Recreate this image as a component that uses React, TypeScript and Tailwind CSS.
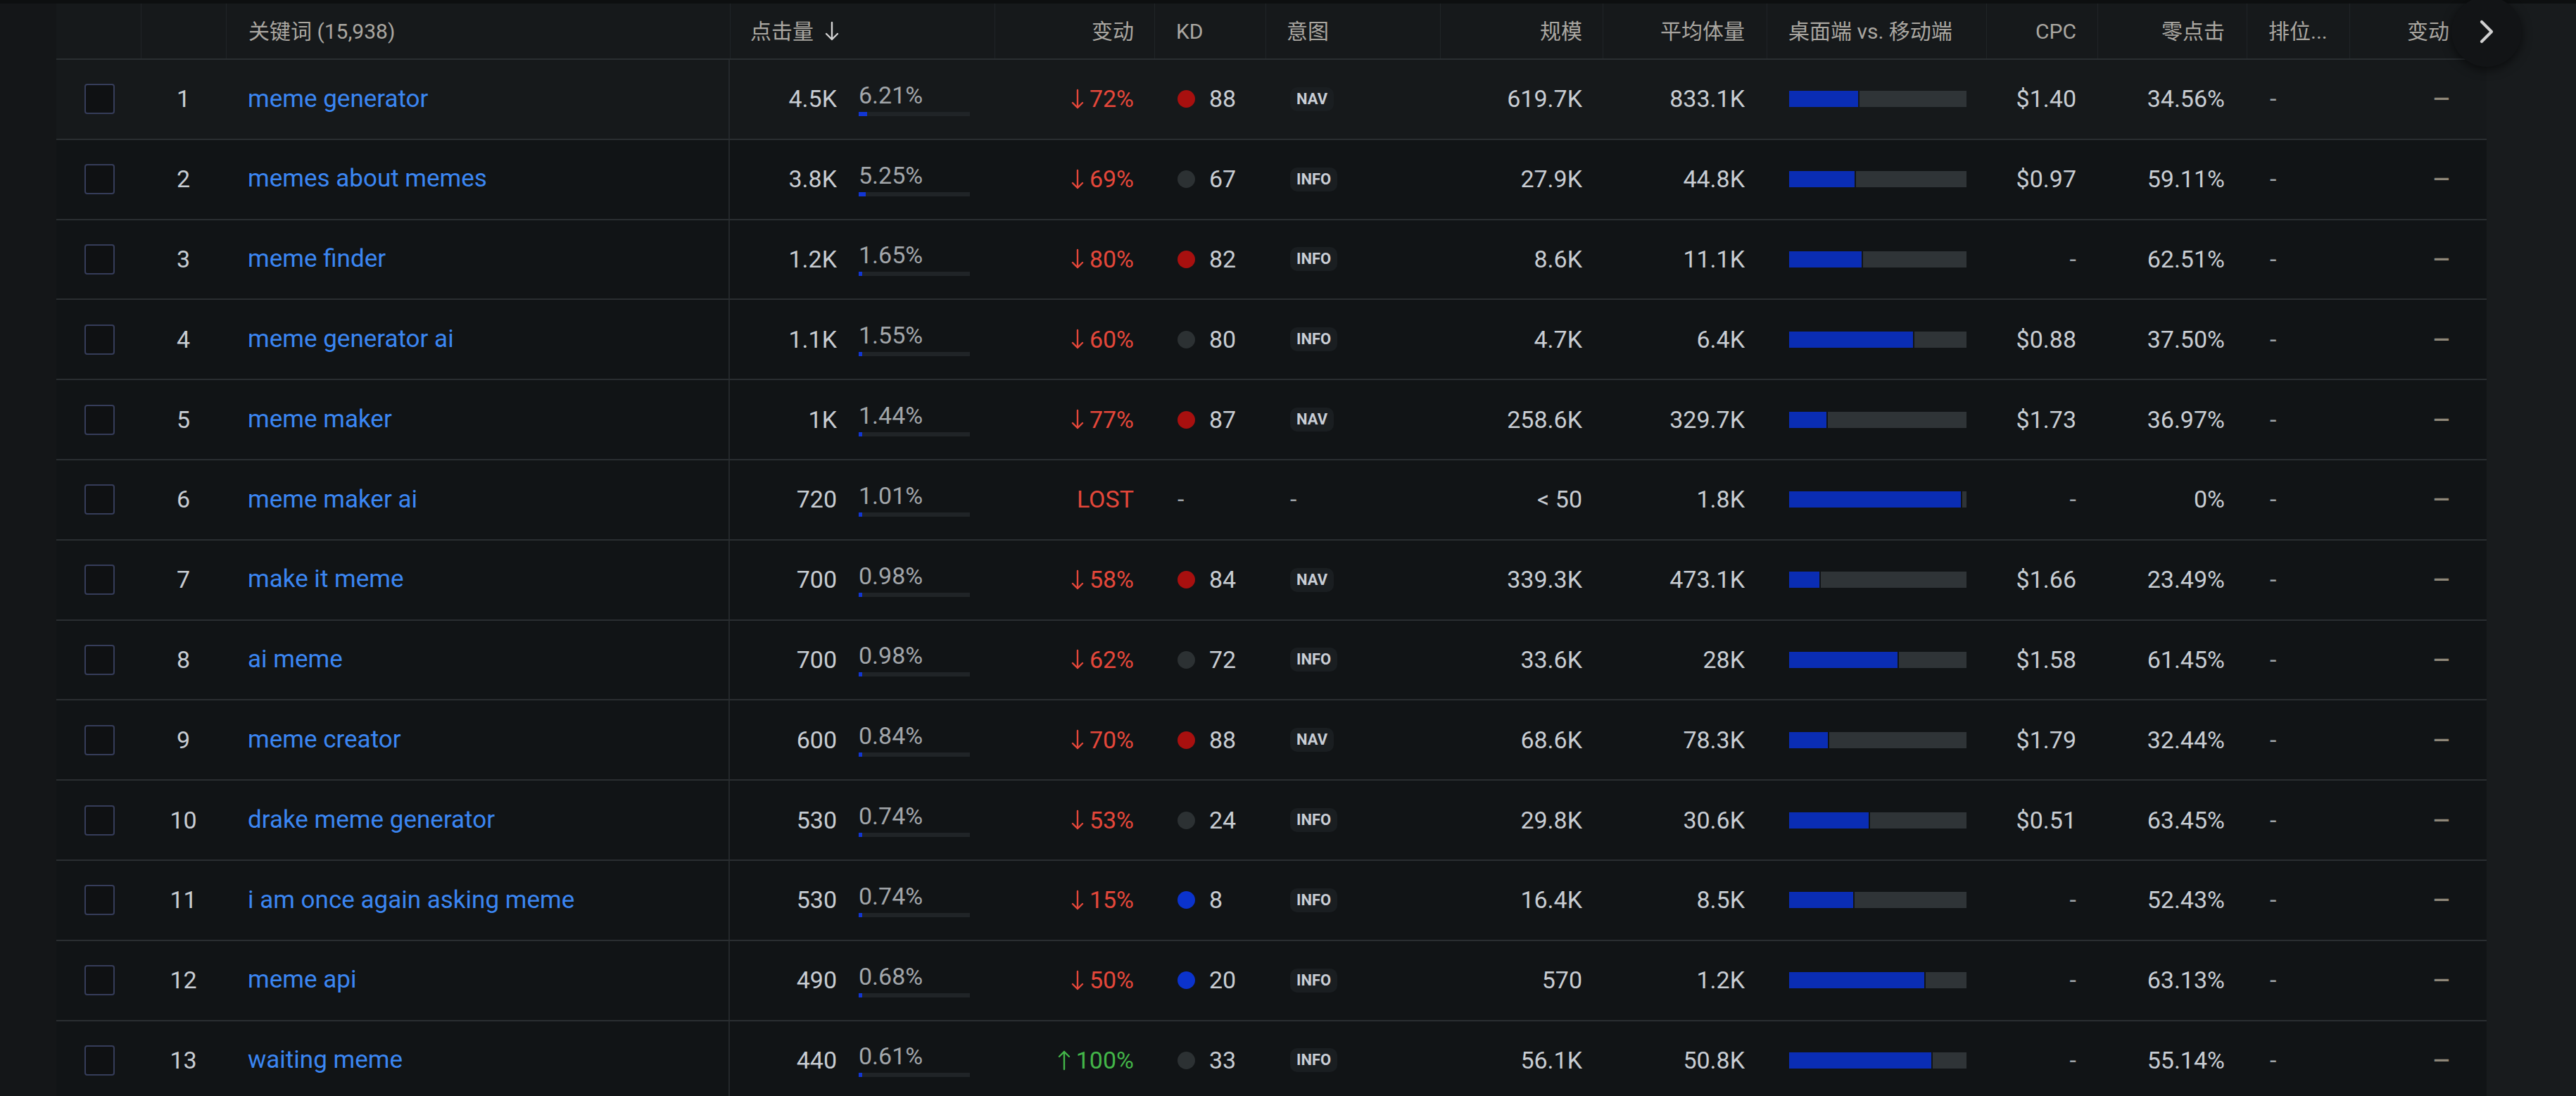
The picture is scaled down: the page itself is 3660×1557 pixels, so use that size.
import { ChevronRight } from 'lucide-react'

type Row = {
  kw: string
  clicks: string
  share: number
  change: string
  up?: boolean
  kdColor?: 'red' | 'grey' | 'blue'
  kd?: string
  intent?: 'NAV' | 'INFO'
  size: string
  avg: string
  desktop: number
  cpc: string
  zero: string
}

const rows: Row[] = [
  { kw: 'meme generator', clicks: '4.5K', share: 6.21, change: '72%', kdColor: 'red', kd: '88', intent: 'NAV', size: '619.7K', avg: '833.1K', desktop: 0.39, cpc: '$1.40', zero: '34.56%' },
  { kw: 'memes about memes', clicks: '3.8K', share: 5.25, change: '69%', kdColor: 'grey', kd: '67', intent: 'INFO', size: '27.9K', avg: '44.8K', desktop: 0.37, cpc: '$0.97', zero: '59.11%' },
  { kw: 'meme finder', clicks: '1.2K', share: 1.65, change: '80%', kdColor: 'red', kd: '82', intent: 'INFO', size: '8.6K', avg: '11.1K', desktop: 0.41, cpc: '-', zero: '62.51%' },
  { kw: 'meme generator ai', clicks: '1.1K', share: 1.55, change: '60%', kdColor: 'grey', kd: '80', intent: 'INFO', size: '4.7K', avg: '6.4K', desktop: 0.7, cpc: '$0.88', zero: '37.50%' },
  { kw: 'meme maker', clicks: '1K', share: 1.44, change: '77%', kdColor: 'red', kd: '87', intent: 'NAV', size: '258.6K', avg: '329.7K', desktop: 0.21, cpc: '$1.73', zero: '36.97%' },
  { kw: 'meme maker ai', clicks: '720', share: 1.01, change: 'LOST', size: '< 50', avg: '1.8K', desktop: 0.97, cpc: '-', zero: '0%' },
  { kw: 'make it meme', clicks: '700', share: 0.98, change: '58%', kdColor: 'red', kd: '84', intent: 'NAV', size: '339.3K', avg: '473.1K', desktop: 0.17, cpc: '$1.66', zero: '23.49%' },
  { kw: 'ai meme', clicks: '700', share: 0.98, change: '62%', kdColor: 'grey', kd: '72', intent: 'INFO', size: '33.6K', avg: '28K', desktop: 0.61, cpc: '$1.58', zero: '61.45%' },
  { kw: 'meme creator', clicks: '600', share: 0.84, change: '70%', kdColor: 'red', kd: '88', intent: 'NAV', size: '68.6K', avg: '78.3K', desktop: 0.22, cpc: '$1.79', zero: '32.44%' },
  { kw: 'drake meme generator', clicks: '530', share: 0.74, change: '53%', kdColor: 'grey', kd: '24', intent: 'INFO', size: '29.8K', avg: '30.6K', desktop: 0.45, cpc: '$0.51', zero: '63.45%' },
  { kw: 'i am once again asking meme', clicks: '530', share: 0.74, change: '15%', kdColor: 'blue', kd: '8', intent: 'INFO', size: '16.4K', avg: '8.5K', desktop: 0.36, cpc: '-', zero: '52.43%' },
  { kw: 'meme api', clicks: '490', share: 0.68, change: '50%', kdColor: 'blue', kd: '20', intent: 'INFO', size: '570', avg: '1.2K', desktop: 0.76, cpc: '-', zero: '63.13%' },
  { kw: 'waiting meme', clicks: '440', share: 0.61, change: '100%', up: true, kdColor: 'grey', kd: '33', intent: 'INFO', size: '56.1K', avg: '50.8K', desktop: 0.8, cpc: '-', zero: '55.14%' },
]

const grid =
  'grid grid-cols-[120px_121px_716px_376px_227px_158px_248px_231px_233px_312px_158px_212px_146px_195px]'

const dotColor = {
  red: 'bg-[#a8100f]',
  grey: 'bg-[#2c3133]',
  blue: 'bg-[#0b33cc]',
}

function Arrow({ up }: { up?: boolean }) {
  return (
    <svg width="22" height="30" viewBox="0 0 22 30" fill="none" stroke="currentColor" strokeWidth="2.4" strokeLinecap="round" strokeLinejoin="round">
      {up ? <path d="M11 28V3M4 10l7-7 7 7" /> : <path d="M11 2v25M4 20l7 7 7-7" />}
    </svg>
  )
}

function Dash() {
  return <span className="text-[#9ea3a8]">-</span>
}

export default function App() {
  return (
    <div
      className="relative h-[1557px] w-full overflow-hidden bg-[#141618] text-[34px] text-[#c8cdd3]"
      style={{ fontFamily: 'Roboto, "Noto Sans CJK SC", sans-serif' }}
    >
      <div className="h-[5px] bg-[#0d0f10]" />
      <div className="flex">
        <div className="w-[80px] shrink-0" />
        <div className="w-[3453px] shrink-0">
          {/* Header */}
          <div className={`${grid} h-[80px] border-b-2 border-[#2a2e31] bg-[#16191b] text-[30px] text-[#aaa7a1]`}>
            <div />
            <div className="border-l border-[#202427]" />
            <div className="flex items-center border-l border-[#202427] pl-[31px]">关键词 (15,938)</div>
            <div className="flex items-center gap-[14px] border-l border-[#202427] pl-[28px]">
              点击量
              <svg width="24" height="30" viewBox="0 0 24 30" fill="none" stroke="#d2d2d2" strokeWidth="2.4" strokeLinecap="round" strokeLinejoin="round">
                <path d="M12 3v24M4 19l8 8 8-8" />
              </svg>
            </div>
            <div className="flex items-center justify-end border-l border-[#202427] pr-[29px]">变动</div>
            <div className="flex items-center border-l border-[#202427] pl-[30px]">KD</div>
            <div className="flex items-center border-l border-[#202427] pl-[29px]">意图</div>
            <div className="flex items-center justify-end border-l border-[#202427] pr-[29px]">规模</div>
            <div className="flex items-center justify-end border-l border-[#202427] pr-[31px]">平均体量</div>
            <div className="flex items-center border-l border-[#202427] pl-[30px]">桌面端 vs. 移动端</div>
            <div className="flex items-center justify-end border-l border-[#202427] pr-[30px]">CPC</div>
            <div className="flex items-center justify-end border-l border-[#202427] pr-[31px]">零点击</div>
            <div className="flex items-center border-l border-[#202427] pl-[30px]">排位...</div>
            <div className="flex items-center justify-end border-l border-[#202427] pr-[53px]">变动</div>
          </div>

          {/* Body */}
          {rows.map((r, i) => (
            <div
              key={r.kw}
              className={`${grid} h-[113.8px] border-b-2 border-[#2a2e31] ${i === 0 ? 'bg-[#16191b]' : 'bg-[#111416]'}`}
            >
              <div className="flex items-center pl-[40px]">
                <div className="h-[43px] w-[43px] rounded-[4px] border-2 border-[#363d5a] bg-[#0f1113]" />
              </div>
              <div className="flex items-center justify-center">{i + 1}</div>
              <div className="flex items-center border-r-2 border-[#24282b] pl-[31px] text-[35px] text-[#3b86f2]">{r.kw}</div>
              <div className="flex items-center">
                <div className="w-[152px] text-right">{r.clicks}</div>
                <div className="ml-[31px] flex w-[158px] flex-col">
                  <span className="leading-[36px] text-[#a2a6aa]">{r.share.toFixed(2)}%</span>
                  <div className="mt-[6px] h-[6px] w-full bg-[#202427]">
                    <div className="h-full bg-[#1236d4]" style={{ width: `${Math.max(r.share * 1.2, 3)}%` }} />
                  </div>
                </div>
              </div>
              <div
                className={`flex items-center justify-end gap-[6px] pr-[29px] ${r.up ? 'text-[#43b649]' : 'text-[#e4473a]'}`}
              >
                {r.change !== 'LOST' && <Arrow up={r.up} />}
                {r.change}
              </div>
              <div className="flex items-center gap-[20px] pl-[33px]">
                {r.kd ? (
                  <>
                    <span className={`h-[25px] w-[25px] rounded-full ${dotColor[r.kdColor!]}`} />
                    {r.kd}
                  </>
                ) : (
                  <Dash />
                )}
              </div>
              <div className="flex items-center pl-[35px]">
                {r.intent ? (
                  <span className="rounded-[10px] bg-[#1a1e21] px-[9px] py-[5px] text-[22px] font-bold leading-[24px] text-[#c9ced6]">
                    {r.intent}
                  </span>
                ) : (
                  <Dash />
                )}
              </div>
              <div className="flex items-center justify-end pr-[29px]">{r.size}</div>
              <div className="flex items-center justify-end pr-[31px]">{r.avg}</div>
              <div className="flex items-center pl-[32px] pr-[28px]">
                <div className="flex h-[23px] w-full gap-[2px]">
                  <div className="h-full bg-[#0a2db4]" style={{ width: `${r.desktop * 100}%` }} />
                  <div className="h-full flex-1 bg-[#2f3437]" />
                </div>
              </div>
              <div className="flex items-center justify-end pr-[30px]">{r.cpc === '-' ? <Dash /> : r.cpc}</div>
              <div className="flex items-center justify-end pr-[31px]">{r.zero}</div>
              <div className="flex items-center pl-[33px]">
                <Dash />
              </div>
              <div className="flex items-center justify-end pr-[53px] text-[30px] font-bold text-[#8e8779]">—</div>
            </div>
          ))}
        </div>
        <div className="h-[1552px] flex-1 bg-[#181b1d]" />
      </div>

      {/* Scroll-right button */}
      <div className="absolute left-[3483px] top-[-5px] flex h-[100px] w-[100px] items-center justify-center rounded-full bg-[#121416] shadow-[0_4px_14px_rgba(0,0,0,0.55)]">
        <ChevronRight size={56} strokeWidth={1.8} className="text-[#d0d0d0]" />
      </div>
    </div>
  )
}
